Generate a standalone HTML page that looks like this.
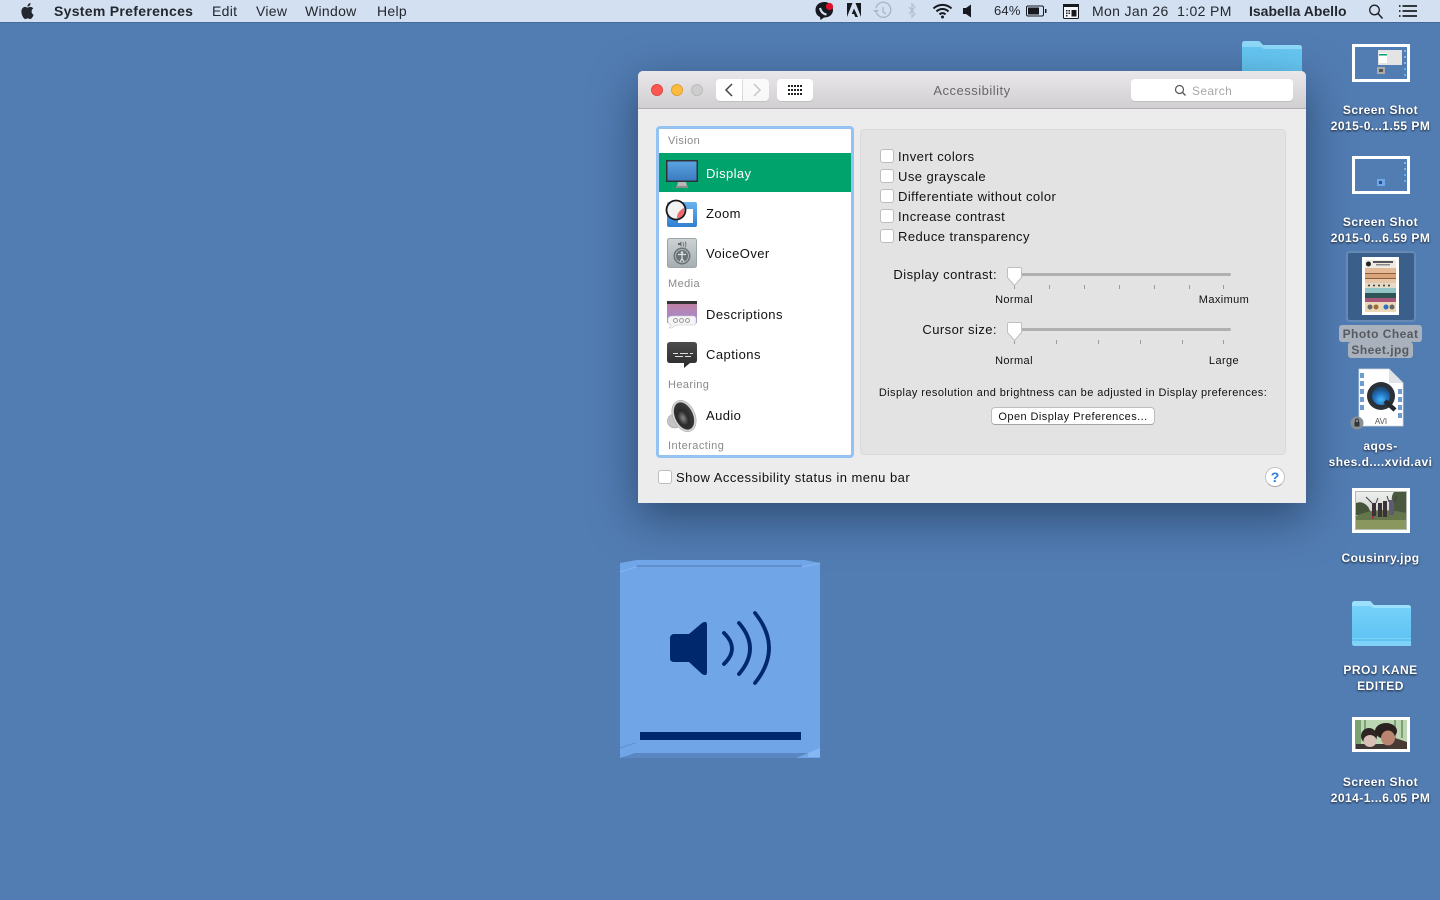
<!DOCTYPE html>
<html lang="en"><head><meta charset="utf-8"><title>System Preferences</title>
<style>
*{box-sizing:border-box}
html,body{margin:0;padding:0;width:1440px;height:900px;overflow:hidden;background:#527db3;font-family:"Liberation Sans",sans-serif}
.a,.t{position:absolute}
.t{white-space:nowrap;line-height:16px;font-size:13px;color:#111;letter-spacing:.44px}
.c{text-align:center}
.m{font-size:14px;color:#23272f;top:3px;letter-spacing:.3px}
.h{font-size:11px;color:#8a8a8a;left:668px;letter-spacing:.4px}
.s{font-size:11px;color:#111;letter-spacing:.4px}
.cb{position:absolute;width:14px;height:14px;background:#fff;border:1px solid #bdbdbd;border-radius:3px}
.d{font-size:12px;font-weight:bold;color:#fff;left:1310px;width:141px;text-align:center;letter-spacing:.47px;text-shadow:0 1px 2px rgba(0,0,0,.75)}
.tk{position:absolute;width:1px;height:4px;background:#9b9b9b}
.btn{position:absolute;top:79px;height:22px;background:#fff;border-radius:4px;box-shadow:0 1px 0 #c2c0c2}
.trk{position:absolute;left:1014px;width:217px;height:3px;background:#b0b0b0;border-radius:2px}
</style></head><body>
<!-- folder behind window -->
<svg class="a" style="left:1240px;top:38px" width="64" height="40" viewBox="0 0 64 40"><path d="M2 6q0-3 3-3h13q2 0 3 2l2 2h36q3 0 3 3v30H2z" fill="#66c8f3"/><path d="M2 6q0-3 3-3h13q2 0 3 2l2 2h36q3 0 3 3v1H24l-3-2H2z" fill="#8fd9f9"/></svg>

<!-- menu bar -->
<div class="a" style="left:0;top:0;width:1440px;height:23px;background:#d3e0f1;border-bottom:1px solid #436b9b"></div>
<svg class="a" style="left:20px;top:3px" width="15" height="16" viewBox="0 0 24 24" preserveAspectRatio="none"><path fill="#23272f" d="M12.152 6.896c-.948 0-2.415-1.078-3.96-1.04-2.04.027-3.91 1.183-4.961 3.014-2.117 3.675-.546 9.103 1.519 12.09 1.013 1.454 2.208 3.09 3.792 3.039 1.52-.065 2.09-.987 3.935-.987 1.831 0 2.35.987 3.96.948 1.637-.026 2.676-1.48 3.676-2.948 1.156-1.688 1.636-3.325 1.662-3.415-.039-.013-3.182-1.221-3.22-4.857-.026-3.04 2.48-4.494 2.597-4.559-1.429-2.09-3.623-2.324-4.39-2.376-2-.156-3.675 1.09-4.61 1.09zM15.53 3.83c.843-1.012 1.4-2.427 1.245-3.83-1.207.052-2.662.805-3.532 1.818-.78.896-1.454 2.338-1.273 3.714 1.338.104 2.715-.688 3.559-1.701"/></svg>
<div class="t m" style="left:54px;font-weight:bold">System Preferences</div>
<div class="t m" style="left:212px">Edit</div>
<div class="t m" style="left:256px">View</div>
<div class="t m" style="left:305px">Window</div>
<div class="t m" style="left:377px">Help</div>

<svg class="a" style="left:810px;top:0" width="280" height="22" viewBox="810 0 280 22">
<path d="M824.500 2c-5.500 0-9 3.300-9 8 0 3.500 2 6 4.500 7l.5 3 3.500-2.500c5.300 0 9-3 9-7.500s-3.700-8-8.500-8z" fill="#16191f"/>
<path d="M820 8c1 4 3 6 6.500 6.500" stroke="#d3e0f1" stroke-width="2.200" fill="none"/>
<circle cx="829.500" cy="6.500" r="3.600" fill="#e0102a"/>
<path d="M847 3h5.500L847 17zM855.500 3H861v14zM854 8.500l4 8.500h-2.700l-1.300-3h-2.300z" fill="#16191f"/>
<g stroke="#a9b4c2" stroke-width="1.300" fill="none"><path d="M876 8a7.500 7.500 0 1 1 .5 5"/><path d="M883 7v5l3 2"/></g><path d="M873 10h6l-3 3z" fill="#a9b4c2"/>
<path d="M909 7l6 7-3 3V4l3 3-6 7" stroke="#b4bfcd" stroke-width="1.200" fill="none"/>
<g fill="none" stroke="#16191f" stroke-width="2"><path d="M933.500 8.500a13 13 0 0 1 18 0"/><path d="M936.500 11.500a8.500 8.500 0 0 1 12 0"/><path d="M939.500 14.500a4 4 0 0 1 6 0"/></g><circle cx="942.500" cy="17" r="1.500" fill="#16191f"/>
<path d="M963 8h3l5-3.500v13L966 14h-3z" fill="#16191f"/>
<rect x="1026.500" y="6" width="17" height="10" rx="1.500" fill="none" stroke="#16191f"/><rect x="1028" y="7.500" width="11" height="7" fill="#16191f"/><rect x="1045" y="9" width="1.500" height="4" fill="#16191f"/>
<rect x="1063.500" y="4.500" width="15" height="14" rx="1" fill="#f4f6fa" stroke="#16191f"/><rect x="1063" y="4" width="16" height="3" fill="#16191f"/>
<path d="M1066 10h1.500v1.500H1066zM1068.500 10h1.500v1.500h-1.500zM1066 12.500h1.500V14H1066zM1068.500 12.500h1.500V14h-1.500zM1066 15h1.500v1.500H1066zM1071.500 10h5v6.500h-5z" fill="#16191f"/>
</svg>
<div class="t m" style="left:994px;font-size:13px;letter-spacing:.2px">64%</div>
<div class="t m" style="left:1092px;letter-spacing:.35px">Mon Jan 26&nbsp; 1:02 PM</div>
<div class="t m" style="left:1249px;font-weight:bold;letter-spacing:0">Isabella Abello</div>
<svg class="a" style="left:1365px;top:0" width="60" height="22"><circle cx="9.500" cy="10" r="4.800" fill="none" stroke="#1d2026" stroke-width="1.300"/><path d="M13 13.500l4.500 5" stroke="#1d2026" stroke-width="1.500"/><path d="M34 6h1.500M34 11h1.500M34 16h1.500M37.500 6H52M37.500 11H52M37.500 16H52" stroke="#1d2026" stroke-width="1.700"/></svg>

<!-- window -->
<div class="a" style="left:638px;top:71px;width:668px;height:432px;background:#ececec;border-radius:5px 5px 0 0;box-shadow:0 14px 45px rgba(10,25,50,.5)"></div>
<div class="a" style="left:638px;top:71px;width:668px;height:38px;background:linear-gradient(#e9e7e9,#d1cfd1);border-bottom:1px solid #b2b1b2;border-radius:5px 5px 0 0"></div>
<div class="a" style="left:651px;top:84px;width:12px;height:12px;border-radius:50%;background:#fc5753;border:1px solid #e2463f"></div>
<div class="a" style="left:671px;top:84px;width:12px;height:12px;border-radius:50%;background:#fdbc40;border:1px solid #e0a231"></div>
<div class="a" style="left:691px;top:84px;width:12px;height:12px;border-radius:50%;background:#cdcdcd;border:1px solid #bbb"></div>
<div class="btn" style="left:716px;width:26px;border-radius:4px 0 0 4px"></div>
<div class="btn" style="left:743px;width:26px;border-radius:0 4px 4px 0;opacity:.85"></div>
<div class="btn" style="left:777px;width:36px"></div>
<div class="btn" style="left:1131px;width:162px"></div>
<svg class="a" style="left:716px;top:79px" width="100" height="22"><path d="M16 5l-6 6 6 6" fill="none" stroke="#444" stroke-width="1.500"/><path d="M38 5l6 6-6 6" fill="none" stroke="#c6c6c6" stroke-width="1.500"/>
<g fill="#222"><path d="M72 6h2v2h-2zM75 6h2v2h-2zM78 6h2v2h-2zM81 6h2v2h-2zM84 6h2v2h-2zM72 10h2v2h-2zM75 10h2v2h-2zM78 10h2v2h-2zM81 10h2v2h-2zM84 10h2v2h-2zM72 14h2v2h-2zM75 14h2v2h-2zM78 14h2v2h-2zM81 14h2v2h-2zM84 14h2v2h-2z"/></g></svg>
<div class="t c" style="left:872px;width:200px;top:83px;color:#686868;letter-spacing:.5px">Accessibility</div>
<svg class="a" style="left:1173px;top:83px" width="14" height="14"><circle cx="6.500" cy="6.500" r="4" fill="none" stroke="#555" stroke-width="1.200"/><path d="M9.500 9.500l3 3" stroke="#555" stroke-width="1.300"/></svg>
<div class="t" style="left:1192px;top:83px;font-size:12px;color:#a8a8a8;letter-spacing:.35px">Search</div>

<!-- list -->
<div class="a" style="left:656px;top:126px;width:198px;height:332px;background:#fff;border:3px solid #94c3f3;border-radius:4px"></div>
<div class="a" style="left:659px;top:153px;width:192px;height:39px;background:#00a36b"></div>
<div class="t h" style="top:133px">Vision</div>
<div class="t" style="left:706px;top:166px;color:#fff;letter-spacing:.4px">Display</div>
<div class="t" style="left:706px;top:206px;letter-spacing:.4px">Zoom</div>
<div class="t" style="left:706px;top:246px;letter-spacing:.4px">VoiceOver</div>
<div class="t h" style="top:276px">Media</div>
<div class="t" style="left:706px;top:307px;letter-spacing:.45px">Descriptions</div>
<div class="t" style="left:706px;top:347px;letter-spacing:.45px">Captions</div>
<div class="t h" style="top:377px">Hearing</div>
<div class="t" style="left:706px;top:408px;letter-spacing:.4px">Audio</div>
<div class="t h" style="top:438px;letter-spacing:.45px">Interacting</div>

<svg class="a" style="left:660px;top:155px" width="44" height="285" viewBox="660 155 44 285">
<defs>
<linearGradient id="g1" x1="0" y1="0" x2="0" y2="1"><stop offset="0" stop-color="#5aa3e0"/><stop offset="1" stop-color="#3b7cc0"/></linearGradient>
<linearGradient id="g2" x1="0" y1="0" x2="0" y2="1"><stop offset="0" stop-color="#cdd3d5"/><stop offset="1" stop-color="#a6aeb1"/></linearGradient>
<linearGradient id="g3" x1="0" y1="0" x2="0" y2="1"><stop offset="0" stop-color="#c37f9b"/><stop offset="1" stop-color="#a08cd8"/></linearGradient>
<linearGradient id="g4" x1="0" y1="0" x2="0" y2="1"><stop offset="0" stop-color="#4c4c4c"/><stop offset="1" stop-color="#2a2a2a"/></linearGradient>
<linearGradient id="gz" x1="0" y1="0" x2="0" y2="1"><stop offset="0" stop-color="#6ab2ee"/><stop offset="1" stop-color="#2f80d0"/></linearGradient>
<radialGradient id="g5" cx=".4" cy=".55" r=".6"><stop offset="0" stop-color="#8a8a8a"/><stop offset=".45" stop-color="#2a2a2a"/><stop offset="1" stop-color="#3c3c3c"/></radialGradient>
</defs>
<rect x="666" y="160" width="32" height="22" fill="#2e3338"/><rect x="667.500" y="161.500" width="29" height="19" fill="url(#g1)"/>
<path d="M678 182h8l1 4h-10z" fill="#b8b8b8"/><rect x="676" y="186" width="12" height="2" fill="#8d8d8d"/>
<rect x="667" y="202" width="30" height="25" rx="2" fill="url(#gz)"/><rect x="678" y="209" width="15" height="14" fill="#fff"/>
<circle cx="676" cy="210" r="9" fill="#f3f1f1"/><path d="M684 208a8.500 8.500 0 0 1-6 10.500l-1-1q0-6 7-9.500z" fill="#f0686c"/><circle cx="676" cy="210" r="9.500" fill="none" stroke="#16181c" stroke-width="1.800"/>
<rect x="667.500" y="238.500" width="29" height="29" rx="2" fill="url(#g2)" stroke="#9ca5a8"/>
<circle cx="682" cy="256" r="8.500" fill="#6b7275"/><circle cx="682" cy="256" r="6.500" fill="none" stroke="#aeb5b7"/><circle cx="682" cy="252.500" r="1.300" fill="#dce2e4"/><path d="M678 254.500h8M682 254.500v4l-2 3.500M682 258.500l2 3.500" stroke="#dce2e4" stroke-width="1.200" fill="none"/>
<path d="M678 243h1.500l2-1.500v5l-2-1.500H678z" fill="#626a6d"/><path d="M683 242.500q1.500 2 0 4M685 241.500q2 3 0 6" stroke="#626a6d" fill="none" stroke-width=".8"/>
<rect x="667" y="301" width="30" height="22" fill="url(#g3)"/><rect x="667" y="301" width="30" height="3" fill="#333"/>
<path d="M673 316h20q3 0 3 3v3q0 3-3 3h-17l-4 3h-3q2-1 2-3.500-3 0-3-3v-2.500q0-3 5-3z" fill="#f5f5f5" stroke="#c9c9c9" stroke-width=".6"/>
<g fill="none" stroke="#9a9a9a"><circle cx="675.500" cy="320.500" r="2"/><circle cx="681.500" cy="320.500" r="2"/><circle cx="687.500" cy="320.500" r="2"/></g>
<path d="M670 342h24q3 0 3 3v15q0 3-3 3h-4l-6 5v-5h-14q-3 0-3-3v-15q0-3 3-3z" fill="url(#g4)"/>
<path d="M673 353.500h5M680 353.500h8M690 353.500h3M675 356.500h8M685 356.500h6" stroke="#ddd" stroke-width=".9"/>
<circle cx="674.500" cy="421" r="7" fill="#c4c4c4" stroke="#999" stroke-width=".6"/>
<ellipse cx="684" cy="416" rx="11" ry="16.500" transform="rotate(-25 684 416)" fill="#d6d6d6" stroke="#a0a0a0" stroke-width=".5"/>
<ellipse cx="684" cy="416" rx="9" ry="14.500" transform="rotate(-25 684 416)" fill="url(#g5)"/>
</svg>

<!-- panel -->
<div class="a" style="left:860px;top:129px;width:426px;height:326px;background:#e3e3e3;border:1px solid #dadada;border-radius:4px"></div>
<div class="cb" style="left:880px;top:149px"></div>
<div class="cb" style="left:880px;top:169px"></div>
<div class="cb" style="left:880px;top:189px"></div>
<div class="cb" style="left:880px;top:209px"></div>
<div class="cb" style="left:880px;top:229px"></div>
<div class="t" style="left:898px;top:149px">Invert colors</div>
<div class="t" style="left:898px;top:169px">Use grayscale</div>
<div class="t" style="left:898px;top:189px">Differentiate without color</div>
<div class="t" style="left:898px;top:209px">Increase contrast</div>
<div class="t" style="left:898px;top:229px">Reduce transparency</div>

<div class="t" style="left:797px;width:200px;text-align:right;top:267px">Display contrast:</div>
<div class="trk" style="top:273px"></div>
<div class="tk" style="left:1014px;top:285px"></div><div class="tk" style="left:1049px;top:285px"></div><div class="tk" style="left:1084px;top:285px"></div><div class="tk" style="left:1119px;top:285px"></div><div class="tk" style="left:1154px;top:285px"></div><div class="tk" style="left:1189px;top:285px"></div><div class="tk" style="left:1223px;top:285px"></div>
<svg class="a" style="left:1005px;top:266px" width="19" height="22"><path d="M2.500 3q0-1.500 1.500-1.500h11q1.500 0 1.500 1.500v8.500L9.500 19.500 2.500 11.500z" fill="#fff" stroke="#c0c0c0"/></svg>
<div class="t s c" style="left:964px;width:100px;top:292px">Normal</div>
<div class="t s c" style="left:1174px;width:100px;top:292px">Maximum</div>

<div class="t" style="left:797px;width:200px;text-align:right;top:322px">Cursor size:</div>
<div class="trk" style="top:328px"></div>
<div class="tk" style="left:1014px;top:340px"></div><div class="tk" style="left:1056px;top:340px"></div><div class="tk" style="left:1098px;top:340px"></div><div class="tk" style="left:1140px;top:340px"></div><div class="tk" style="left:1182px;top:340px"></div><div class="tk" style="left:1223px;top:340px"></div>
<svg class="a" style="left:1005px;top:321px" width="19" height="22"><path d="M2.500 3q0-1.500 1.500-1.500h11q1.500 0 1.500 1.500v8.500L9.500 19.500 2.500 11.500z" fill="#fff" stroke="#c0c0c0"/></svg>
<div class="t s c" style="left:964px;width:100px;top:353px">Normal</div>
<div class="t s c" style="left:1174px;width:100px;top:353px">Large</div>

<div class="t s c" style="left:860px;width:426px;top:385px;letter-spacing:.42px">Display resolution and brightness can be adjusted in Display preferences:</div>
<div class="a" style="left:991px;top:407px;width:164px;height:18px;background:#fff;border:1px solid #bdbdbd;border-bottom-color:#a5a5a5;border-radius:4px"></div>
<div class="t s c" style="left:991px;width:164px;top:409px;letter-spacing:.43px">Open Display Preferences...</div>

<div class="cb" style="left:658px;top:470px"></div>
<div class="t" style="left:676px;top:470px;letter-spacing:.47px">Show Accessibility status in menu bar</div>
<div class="a" style="left:1265px;top:467px;width:20px;height:20px;background:#fff;border:1px solid #c4c4c4;border-bottom-color:#a8a8a8;border-radius:50%"></div>
<div class="t c" style="left:1265px;width:20px;top:469px;font-size:14px;font-weight:bold;color:#2f7de1;letter-spacing:0">?</div>

<!-- volume HUD -->
<svg class="a" style="left:615px;top:555px" width="210" height="210" viewBox="615 555 210 210">
<path d="M620 563l17-3h168l15 3v195H620z" fill="#70a5e8"/>
<path d="M637 565h165v2H637z" fill="#5f8fcc"/>
<path d="M620 572l16-5" stroke="#84b6f2" stroke-width="1" fill="none"/>
<path d="M802 567l18-4" stroke="#84b6f2" stroke-width="1" fill="none"/>
<path d="M620 748l15-5" stroke="#5f90d0" stroke-width="1" fill="none"/>
<path d="M635 753h173l-12 5H620z" fill="#5a87c2"/>
<path d="M808 753l12-5v9h-12z" fill="#84b6f2"/>
<path d="M670 638a4 4 0 0 1 4-4h15l13-11q5-3 5 2v47q0 5-5 2l-13-12h-15q-4 0-4-4z" fill="#00286c"/>
<g fill="none" stroke="#00286c" stroke-width="3.800" stroke-linecap="round"><path d="M724 633Q740 648.500 724 664"/><path d="M739 623Q761 648.500 739 674"/><path d="M755 613Q783 648 755 683"/></g>
<rect x="640" y="732" width="161" height="8" fill="#00286c"/>
</svg>

<!-- desktop icons -->
<svg class="a" style="left:1340px;top:36px" width="100" height="780" viewBox="1340 36 100 780">
<defs>
<linearGradient id="fold" x1="0" y1="0" x2="0" y2="1"><stop offset="0" stop-color="#79d4fb"/><stop offset="1" stop-color="#5bc0f0"/></linearGradient>
<linearGradient id="sky" x1="0" y1="0" x2="0" y2="1"><stop offset="0" stop-color="#eef0ee"/><stop offset=".45" stop-color="#d5d9d3"/><stop offset="1" stop-color="#8b9a76"/></linearGradient>
<radialGradient id="qb" cx=".5" cy=".7" r=".6"><stop offset="0" stop-color="#49b7f5"/><stop offset=".6" stop-color="#2274c4"/><stop offset="1" stop-color="#1b4f80"/></radialGradient>
</defs>
<!-- shot 1 -->
<rect x="1352" y="44" width="58" height="38" fill="#fff"/><rect x="1355" y="47" width="52" height="32" fill="#527db3"/>
<rect x="1378" y="50" width="24" height="15" fill="#e4e4e4"/><rect x="1379" y="53" width="8" height="10" fill="#fff"/><rect x="1379" y="54" width="8" height="1.500" fill="#00a36b"/>
<rect x="1377" y="67" width="8" height="7" fill="#aaa"/><rect x="1379" y="69" width="4" height="3" fill="#555"/>
<g fill="#8fb3da"><rect x="1404" y="50" width="2" height="2"/><rect x="1404" y="56" width="2" height="2"/><rect x="1404" y="62" width="2" height="2"/></g><g fill="#5fb4ee"><rect x="1404" y="68" width="2" height="2"/><rect x="1404" y="74" width="2" height="2"/></g>
<!-- shot 2 -->
<rect x="1352" y="156" width="58" height="38" fill="#fff"/><rect x="1355" y="159" width="52" height="32" fill="#527db3"/>
<rect x="1377" y="179" width="8" height="7" fill="#70a5e8"/><rect x="1379" y="181" width="3" height="3" fill="#274f90"/>
<g fill="#8fb3da"><rect x="1404" y="162" width="2" height="2"/><rect x="1404" y="168" width="2" height="2"/></g><g fill="#5fb4ee"><rect x="1404" y="174" width="2" height="2"/><rect x="1404" y="180" width="2" height="2"/></g>
<!-- selected -->
<rect x="1347" y="252" width="68" height="69" rx="3" fill="#3b5f8b" stroke="#668ab3" stroke-width="2"/>
<rect x="1362" y="257" width="37" height="58" fill="#fff"/>
<rect x="1365" y="260" width="31" height="8" fill="#f0ebe2"/><circle cx="1368.500" cy="264" r="2.500" fill="#222"/><rect x="1373" y="261" width="20" height="2" fill="#555"/><rect x="1376" y="264" width="14" height="1.500" fill="#888"/>
<rect x="1365" y="268" width="31" height="5" fill="#e3b998"/><rect x="1365" y="273" width="31" height="1" fill="#8f5f3c"/><rect x="1365" y="274" width="31" height="4" fill="#d9a37c"/><rect x="1365" y="278" width="31" height="1" fill="#8f5f3c"/><rect x="1365" y="279" width="31" height="4" fill="#e6c6a8"/><rect x="1365" y="283" width="31" height="5" fill="#e4dcc9"/><g fill="#333"><circle cx="1369" cy="285.500" r="1"/><circle cx="1374" cy="285.500" r="1"/><circle cx="1379" cy="285.500" r="1"/><circle cx="1384" cy="285.500" r="1"/><circle cx="1389" cy="285.500" r="1"/></g><rect x="1365" y="288" width="31" height="5" fill="#93c4c6"/><rect x="1365" y="293" width="31" height="5" fill="#2e5556"/><rect x="1365" y="298" width="31" height="4" fill="#a8557a"/><rect x="1365" y="302" width="31" height="10" fill="#ead9b8"/>
<circle cx="1370" cy="307" r="2.500" fill="#666"/><circle cx="1376" cy="307" r="2.500" fill="#a06a32"/><circle cx="1386" cy="307" r="2.500" fill="#2e6fc1"/><circle cx="1392" cy="307" r="2.500" fill="#666"/>
<!-- avi -->
<path d="M1359 369h30l14 14v43h-44z" fill="#fff" stroke="#d5d9de" stroke-width=".8"/><path d="M1389 369v14h14z" fill="#dfe3e8"/>
<g fill="#6f9ccc"><rect x="1360" y="373" width="4" height="5"/><rect x="1360" y="381" width="4" height="5"/><rect x="1360" y="389" width="4" height="5"/><rect x="1360" y="397" width="4" height="5"/><rect x="1360" y="405" width="4" height="5"/><rect x="1398" y="389" width="4" height="5"/><rect x="1398" y="397" width="4" height="5"/><rect x="1398" y="405" width="4" height="5"/><rect x="1398" y="413" width="4" height="5"/></g>
<circle cx="1381" cy="396" r="14" fill="#2b3138"/><circle cx="1381" cy="396" r="9" fill="url(#qb)"/><path d="M1385 401l10 9" stroke="#23282e" stroke-width="4.500"/>
<text x="1381" y="424" font-family="Liberation Sans" font-size="8" fill="#555" text-anchor="middle">AVI</text>
<circle cx="1357" cy="423" r="6.500" fill="#8a8f94"/><rect x="1354.500" y="422" width="5" height="4.500" fill="#33373b"/><path d="M1355.500 422v-1.500a1.500 1.500 0 0 1 3 0V422" fill="none" stroke="#33373b"/>
<!-- cousinry -->
<rect x="1352" y="488" width="58" height="45" fill="#fff"/><rect x="1355" y="491" width="52" height="39" fill="#b5b9b2"/><rect x="1356" y="492" width="50" height="37" fill="url(#sky)"/>
<path d="M1356 503q5-2 9 1t4 5l4 6h-17z" fill="#46543a"/><path d="M1406 492h-12q-3 4-2 9t-2 14h16z" fill="#4a5a40"/><path d="M1356 516q20-10 50-3v16h-50z" fill="#66764b"/><rect x="1356" y="520" width="50" height="9" fill="#8a9860"/>
<g fill="#3a3238"><rect x="1372" y="503" width="4" height="13"/><rect x="1378" y="503" width="4" height="14"/><rect x="1383" y="501" width="4" height="16"/></g><rect x="1389" y="500" width="5" height="15" fill="#5f5a72"/><path d="M1372 503l-6-6M1376 503l2-5M1389 502l-2-6M1394 502l3-6" stroke="#3f3a40" stroke-width="1"/><rect x="1372" y="516" width="2" height="3" fill="#b0304a"/>
<!-- folder -->
<path d="M1352 604q0-3 3-3h14q2 0 3 2l2 2h34q3 0 3 3v35q0 3-3 3h-53q-3 0-3-3z" fill="url(#fold)"/>
<path d="M1352 604q0-3 3-3h14q2 0 3 2l2 2h34q3 0 3 3H1373l-2-2h-19z" fill="#9ce0fc"/>
<path d="M1352 638h59v1h-59zM1352 641h59v5h-56q-3 0-3-3z" fill="#80d3f7"/>
<!-- shot 3 -->
<rect x="1352" y="717" width="58" height="35" fill="#fff"/><rect x="1355" y="720" width="52" height="29" fill="#bcd6b4"/>
<g fill="#7aa273"><rect x="1355" y="720" width="6" height="29"/><rect x="1364" y="720" width="2" height="29"/><rect x="1394" y="720" width="2" height="18"/><rect x="1401" y="720" width="2" height="18"/></g>
<rect x="1356" y="744" width="51" height="5" fill="#3d3633"/>
<path d="M1395 738l12 4v7h-20z" fill="#4a3a34"/>
<ellipse cx="1369" cy="736" rx="8" ry="8" fill="#2e2623"/><ellipse cx="1370" cy="741" rx="6.500" ry="6" fill="#d9c0b5"/>
<ellipse cx="1386" cy="731" rx="11" ry="8" fill="#2a201d"/><ellipse cx="1388" cy="738" rx="7" ry="7.500" fill="#b98570"/>
</svg>

<div class="a" style="left:1339px;top:325px;width:83px;height:17px;background:#a9b1bc;border-radius:3px"></div>
<div class="a" style="left:1348px;top:342px;width:65px;height:16px;background:#a9b1bc;border-radius:3px"></div>

<div class="t d" style="top:102px">Screen Shot</div>
<div class="t d" style="top:118px">2015-0...1.55 PM</div>
<div class="t d" style="top:214px">Screen Shot</div>
<div class="t d" style="top:230px">2015-0...6.59 PM</div>
<div class="t d" style="top:326px;color:#565a60;text-shadow:none">Photo Cheat</div>
<div class="t d" style="top:342px;color:#565a60;text-shadow:none">Sheet.jpg</div>
<div class="t d" style="top:438px">aqos-</div>
<div class="t d" style="top:454px">shes.d....xvid.avi</div>
<div class="t d" style="top:550px">Cousinry.jpg</div>
<div class="t d" style="top:662px">PROJ KANE</div>
<div class="t d" style="top:678px">EDITED</div>
<div class="t d" style="top:774px">Screen Shot</div>
<div class="t d" style="top:790px">2014-1...6.05 PM</div>
</body></html>
